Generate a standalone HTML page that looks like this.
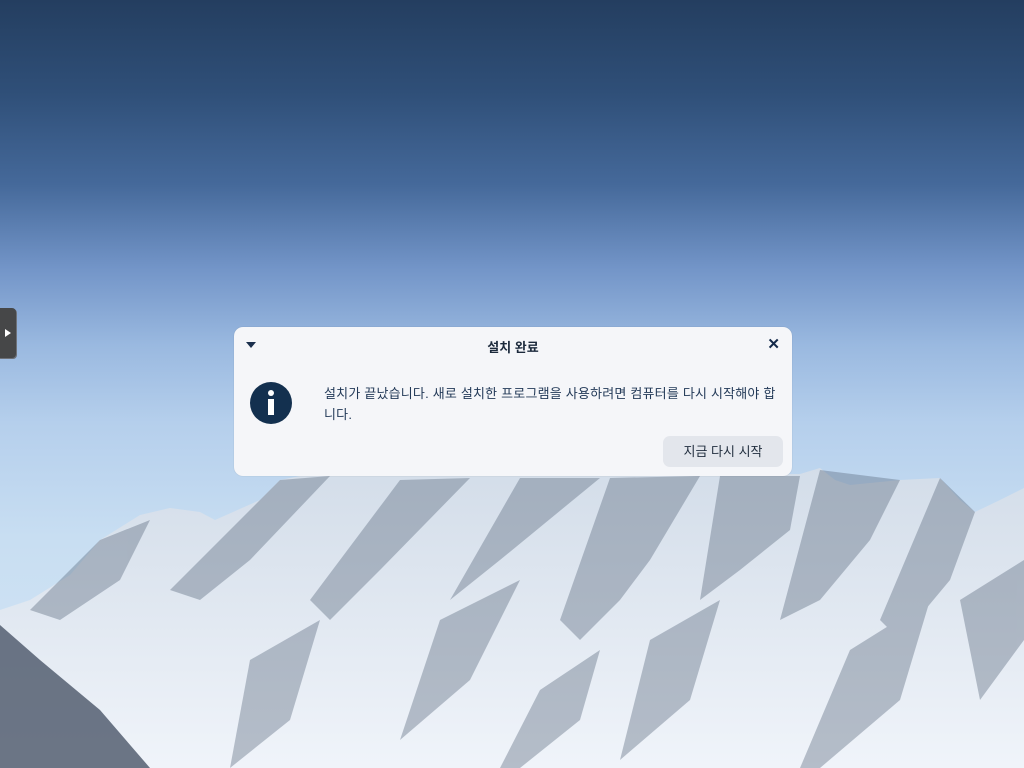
<!DOCTYPE html>
<html><head><meta charset="utf-8"><style>
html,body{margin:0;padding:0;width:1024px;height:768px;overflow:hidden}
body{background:linear-gradient(180deg,#243e60 0%,#2f4f78 12%,#45699a 24%,#7395c8 35%,#9ab9e0 45%,#b5cfec 55%,#c8def2 70%,#d5e6f5 100%);font-family:"Liberation Sans","Noto Sans CJK KR",sans-serif;position:relative}
svg.bg{position:absolute;left:0;top:0}
.tab{position:absolute;left:-4px;top:308px;width:20px;height:50px;background:#464748;border-radius:4px;box-shadow:1px 1px 0 #6d7178}
.tab:after{content:"";position:absolute;left:9px;top:21px;border-left:6px solid #fff;border-top:4px solid transparent;border-bottom:4px solid transparent}
.dlg{position:absolute;left:234px;top:327px;width:558px;height:149px;background:#f5f6f9;border-radius:9px;box-shadow:0 0 1px rgba(0,0,0,.2)}
.title{position:absolute;left:0;right:0;top:10px;text-align:center;font-weight:bold;font-size:13px;color:#1c2a3c}
.tri{position:absolute;left:12px;top:15px;border-top:6px solid #1b2f4d;border-left:5px solid transparent;border-right:5px solid transparent}
.x{position:absolute;right:12px;top:8px;font-size:15px;font-weight:bold;color:#13294a}
.ic{position:absolute;left:16px;top:55px;width:42px;height:42px;border-radius:50%;background:#13304f}
.ic:before{content:"";position:absolute;left:18px;top:8px;width:6px;height:6px;border-radius:50%;background:#fff}
.ic:after{content:"";position:absolute;left:18px;top:17px;width:6px;height:16px;background:#fff}
.msg{position:absolute;left:90px;top:56px;width:452px;font-size:13px;line-height:21px;color:#233a58;letter-spacing:0.2px}
.btn{position:absolute;left:429px;top:109px;width:120px;height:31px;background:#e3e6ec;border-radius:7px;text-align:center;line-height:31px;font-size:13px;color:#1f2c3c}
</style></head><body>
<svg class="bg" width="1024" height="768" viewBox="0 0 1024 768">
<defs><linearGradient id="m" x1="0" y1="0" x2="0" y2="1"><stop offset="0" stop-color="#d3dde9"/><stop offset="1" stop-color="#f0f4fa"/></linearGradient></defs>
<polygon fill="url(#m)" points="0,610 30,600 70,575 100,540 140,515 170,508 200,512 215,520 260,500 280,480 300,476 800,474 820,468 835,480 850,485 900,480 940,478 960,500 975,512 1000,500 1024,488 1024,768 0,768"/>
<g fill="#5d6c80" opacity="0.4">
<polygon points="280,480 330,476 250,560 200,600 170,590"/>
<polygon points="400,480 470,478 380,570 330,620 310,600"/>
<polygon points="520,478 600,478 500,560 450,600"/>
<polygon points="610,478 700,476 650,560 620,600 580,640 560,620"/>
<polygon points="720,476 800,476 790,530 740,570 700,600"/>
<polygon points="820,470 900,480 870,540 820,600 780,620"/>
<polygon points="940,478 975,512 950,580 900,640 880,620"/>
<polygon points="100,540 150,520 120,580 60,620 30,610"/>
<polygon points="440,620 520,580 470,680 400,740"/>
<polygon points="650,640 720,600 690,700 620,760"/>
<polygon points="850,650 930,600 900,700 820,768 800,768"/>
<polygon points="250,660 320,620 290,720 230,768"/>
<polygon points="540,690 600,650 580,720 520,768 500,768"/>
<polygon points="960,600 1024,560 1024,640 980,700"/>
</g>
<polygon fill="#4a5568" opacity="0.8" points="0,625 40,660 100,710 150,768 0,768"/>
</svg>
<div class="tab"></div>
<div class="dlg">
<div class="tri"></div>
<div class="title">설치 완료</div>
<div class="x">✕</div>
<div class="ic"></div>
<div class="msg">설치가 끝났습니다. 새로 설치한 프로그램을 사용하려면 컴퓨터를 다시 시작해야 합<br>니다.</div>
<div class="btn">지금 다시 시작</div>
</div>
</body></html>
